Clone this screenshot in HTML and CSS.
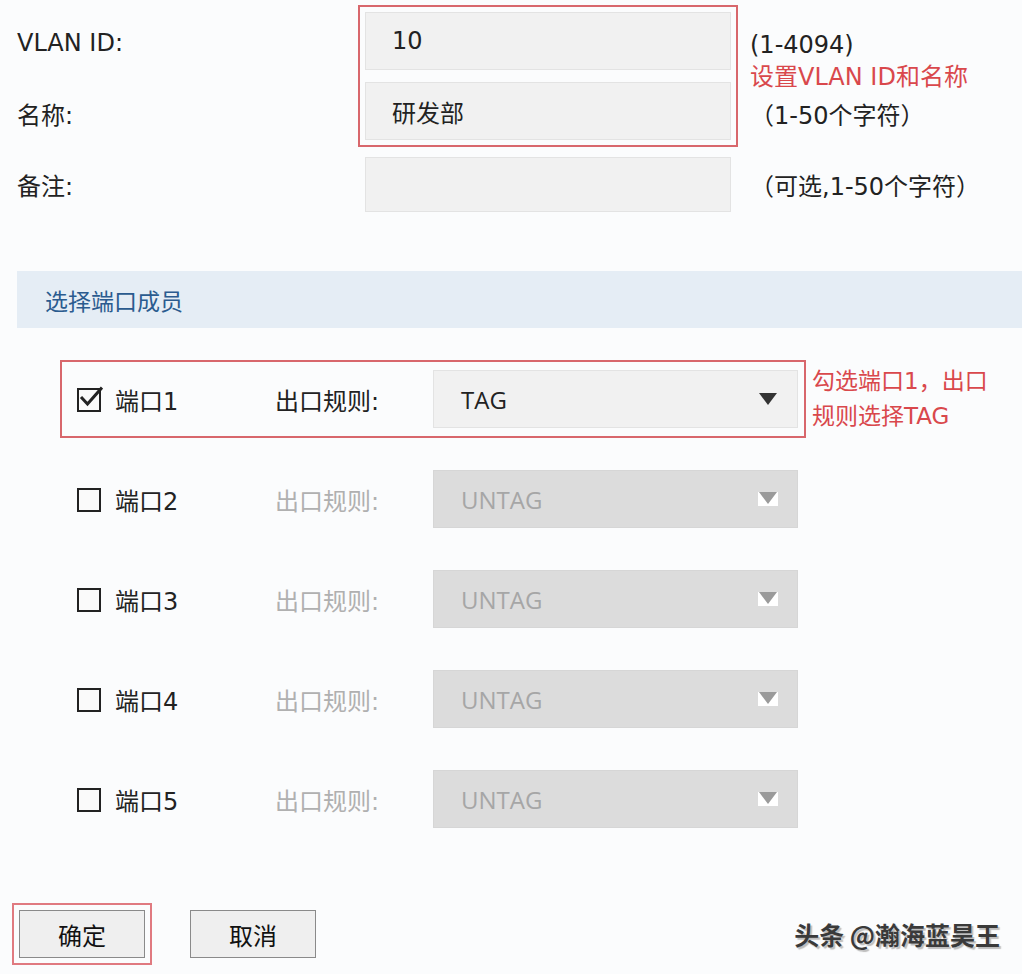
FILE: index.html
```html
<!DOCTYPE html>
<html lang="zh-CN">
<head>
  <meta charset="UTF-8">
  <title>VLAN 设置</title>
  <link rel="stylesheet" href="styles.css">
</head>
<body>

  <!-- VLAN basic settings -->
  <div class="top">
    <div class="labels">
      <div class="field-label">VLAN ID:</div>
      <div class="field-label">名称:</div>
      <div class="field-label note">备注:</div>
    </div>

    <div class="inputs">
      <div class="group">
        <div class="input">10</div>
        <div class="input">研发部</div>
      </div>
      <div class="input note"></div>
    </div>

    <div class="hints">
      <div class="hint">(1-4094)</div>
      <div class="hint red">设置VLAN ID和名称</div>
      <div class="hint gap1">（1-50个字符）</div>
      <div class="hint gap2">（可选,1-50个字符）</div>
    </div>
  </div>

  <div class="section-title">选择端口成员</div>

  <!-- Port members -->
  <div class="ports">
    <div class="port-line">
      <div class="port marked">
        <svg class="check" width="26" height="26" viewBox="0 0 26 26">
          <rect x="1" y="3" width="22" height="22" fill="#fafafa" stroke="#222" stroke-width="2"/>
          <path d="M4 11 L10.5 18 L25 1.5" fill="none" stroke="#222" stroke-width="3"/>
        </svg>
        <span class="port-name">端口1</span>
        <span class="rule-label">出口规则:</span>
        <div class="select">
          <span>TAG</span>
          <svg width="20" height="14" viewBox="0 0 20 14"><polygon points="1,1 19,1 10,13" fill="#333"/></svg>
        </div>
      </div>
      <div class="port-note">勾选端口1，出口<br>规则选择TAG</div>
    </div>

    <div class="port-line">
      <div class="port off">
        <svg class="check" width="26" height="26" viewBox="0 0 26 26">
          <rect x="1" y="3" width="22" height="22" fill="#fafafa" stroke="#222" stroke-width="2"/>
        </svg>
        <span class="port-name">端口2</span>
        <span class="rule-label">出口规则:</span>
        <div class="select">
          <span>UNTAG</span>
          <svg width="20" height="14" viewBox="0 0 20 14"><rect width="20" height="14" fill="#fff"/><polygon points="1,0 19,0 10,12" fill="#9a9a9a"/></svg>
        </div>
      </div>
    </div>

    <div class="port-line">
      <div class="port off">
        <svg class="check" width="26" height="26" viewBox="0 0 26 26">
          <rect x="1" y="3" width="22" height="22" fill="#fafafa" stroke="#222" stroke-width="2"/>
        </svg>
        <span class="port-name">端口3</span>
        <span class="rule-label">出口规则:</span>
        <div class="select">
          <span>UNTAG</span>
          <svg width="20" height="14" viewBox="0 0 20 14"><rect width="20" height="14" fill="#fff"/><polygon points="1,0 19,0 10,12" fill="#9a9a9a"/></svg>
        </div>
      </div>
    </div>

    <div class="port-line">
      <div class="port off">
        <svg class="check" width="26" height="26" viewBox="0 0 26 26">
          <rect x="1" y="3" width="22" height="22" fill="#fafafa" stroke="#222" stroke-width="2"/>
        </svg>
        <span class="port-name">端口4</span>
        <span class="rule-label">出口规则:</span>
        <div class="select">
          <span>UNTAG</span>
          <svg width="20" height="14" viewBox="0 0 20 14"><rect width="20" height="14" fill="#fff"/><polygon points="1,0 19,0 10,12" fill="#9a9a9a"/></svg>
        </div>
      </div>
    </div>

    <div class="port-line">
      <div class="port off">
        <svg class="check" width="26" height="26" viewBox="0 0 26 26">
          <rect x="1" y="3" width="22" height="22" fill="#fafafa" stroke="#222" stroke-width="2"/>
        </svg>
        <span class="port-name">端口5</span>
        <span class="rule-label">出口规则:</span>
        <div class="select">
          <span>UNTAG</span>
          <svg width="20" height="14" viewBox="0 0 20 14"><rect width="20" height="14" fill="#fff"/><polygon points="1,0 19,0 10,12" fill="#9a9a9a"/></svg>
        </div>
      </div>
    </div>
  </div>

  <!-- Buttons -->
  <div class="actions">
    <div class="btn-mark">
      <button class="btn">确定</button>
    </div>
    <button class="btn">取消</button>
    <div class="watermark">头条 @瀚海蓝昊王</div>
  </div>

</body>
</html>
```

FILE: styles.css
```css
body {
  margin: 0;
  background-color: #fbfcfd;
  font-family: "DejaVu Sans", "Noto Sans CJK SC", sans-serif;
  font-size: 24px;
  color: #222;
}

/* Top form: labels, inputs, hints */
.top {
  display: flex;
  padding-left: 17px;
}

.labels {
  width: 348px;
  padding-top: 14px;
}

.field-label {
  height: 58px;
  display: flex;
  align-items: center;
}

.field-label + .field-label {
  margin-top: 12px;
}

.field-label.note {
  margin-top: 15px;
  height: 55px;
}

.inputs {
  width: 366px;
  padding-top: 5px;
}

.group {
  margin: 0 -7px;
  border: 2px solid #d8676c;
  padding: 5px;
  display: flex;
  flex-direction: column;
  gap: 12px;
}

.input {
  height: 58px;
  box-sizing: border-box;
  background-color: #f1f1f1;
  border: 1px solid #e3e3e3;
  padding-left: 26px;
  display: flex;
  align-items: center;
}

.input.note {
  margin-top: 10px;
  height: 55px;
}

.hints {
  margin-left: 19px;
  padding-top: 30px;
}

.hint {
  height: 31px;
  line-height: 31px;
  white-space: nowrap;
}

.hint.red {
  color: #d9484c;
  margin-top: 1px;
}

.hint.gap1 {
  margin-top: 8px;
}

.hint.gap2 {
  margin-top: 40px;
}

/* Section header */
.section-title {
  margin: 59px 0 0 17px;
  height: 57px;
  background-color: #e5edf5;
  padding-left: 28px;
  display: flex;
  align-items: center;
  color: #2b5b8f;
  font-family: "Noto Sans CJK SC", sans-serif;
  font-size: 23px;
}

/* Port rows */
.ports {
  margin-top: 32px;
  padding-left: 60px;
  display: flex;
  flex-direction: column;
  gap: 22px;
}

.port-line {
  display: flex;
  align-items: center;
}

.port {
  width: 746px;
  height: 78px;
  box-sizing: border-box;
  border: 2px solid transparent;
  padding: 0 6px 0 15px;
  display: flex;
  align-items: center;
}

.port.marked {
  border-color: #d8676c;
}

.check {
  margin-right: 12px;
}

.port-name {
  width: 160px;
}

.rule-label {
  width: 158px;
}

.port.off .rule-label {
  color: #b0b0b0;
}

.select {
  width: 365px;
  height: 58px;
  box-sizing: border-box;
  background-color: #f1f1f1;
  border: 1px solid #e3e3e3;
  padding: 0 19px 0 27px;
  display: flex;
  align-items: center;
  justify-content: space-between;
  font-family: "Open Sans", sans-serif;
  font-size: 24px;
  color: #222;
}

.port.off .select {
  background-color: #dcdcdc;
  border-color: #d6d6d6;
  color: #a6a6a6;
}

.port-note {
  margin-left: 6px;
  color: #d9484c;
  line-height: 35px;
  font-size: 23px;
  white-space: nowrap;
}

/* Buttons */
.actions {
  margin-top: 65px;
  padding: 0 22px 0 12px;
  display: flex;
  align-items: center;
  gap: 38px;
}

.btn-mark {
  border: 2px solid #e07a80;
  padding: 5px;
  display: flex;
}

.btn {
  width: 126px;
  height: 48px;
  background-color: #efefef;
  border: 1px solid #8a8a8a;
  font-family: "Noto Sans CJK SC", sans-serif;
  font-size: 24px;
  color: #111;
  padding: 0;
}

.watermark {
  margin-left: auto;
  font-family: "Noto Sans CJK SC", sans-serif;
  font-size: 25px;
  font-weight: bold;
  color: #3a3a3a;
  text-shadow: 2px 2px 1px #bdbdbd;
}
```
